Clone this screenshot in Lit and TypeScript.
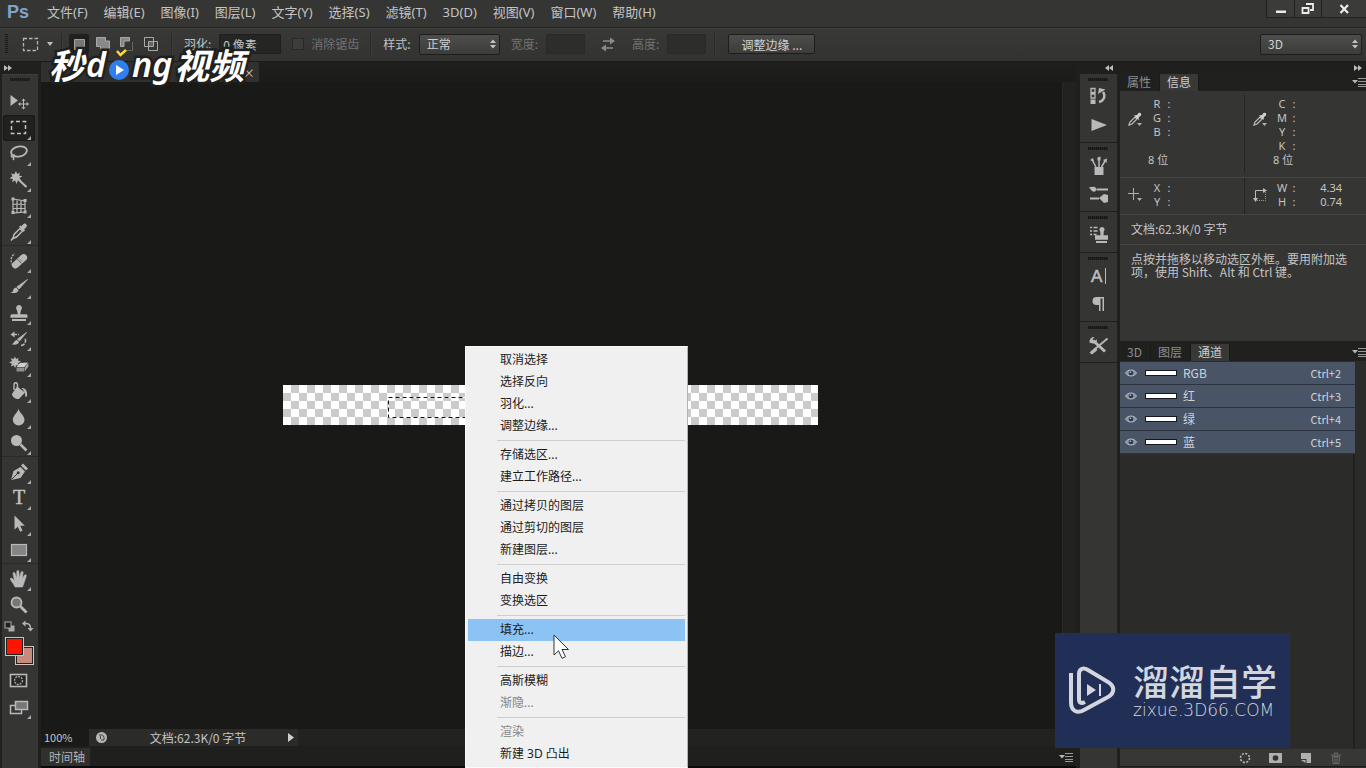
import { LitElement, html, svg, css } from "lit";
import { customElement, property } from "lit/decorators.js";
import { classMap } from "lit/directives/class-map.js";

const icon = (body: unknown, w = 24, h = 24) =>
  html`<svg width=${w} height=${h} viewBox="0 0 ${w} ${h}" aria-hidden="true">${body}</svg>`;

const C = "#b9b9b9";

/* ---------- toolbox glyphs, 24 x 24 ---------- */
const toolArt: Record<string, unknown> = {
  move: svg`<path d="M3.500 5v11l7.500-5.500z" fill=${C}/><path d="M16.500 9.500v9M12 14h9" stroke=${C} stroke-width="1"/><path d="M16.500 8.500l-2 2.300h4zM16.500 19.500l-2-2.300h4zM11 14l2.300-2v4zM22 14l-2.300-2v4z" fill=${C}/>`,
  marquee: svg`<rect x="4.500" y="5.500" width="14" height="12" fill="none" stroke="#c4c4c4" stroke-width="1.500" stroke-dasharray="4 2.500" stroke-dashoffset="2"/>`,
  lasso: svg`<ellipse cx="12" cy="9.500" rx="8" ry="5" transform="rotate(-12 12 9.500)" fill="none" stroke=${C} stroke-width="1.800"/><path d="M5 12.500c-1.500 1-.5 3 1 2.500s2-2 .5-2.500M6 15c1 1 1 2 0 3" fill="none" stroke=${C} stroke-width="1.400"/>`,
  wand: svg`<path d="M9 3l1.200 3 2.800-1.500-1 3 3.500.8-3 1.700 1.800 2.800-3.300-.6L9.500 16l-1.300-3.500L5 14l1-3-3.500-.7 3-2L4 5.500l3.300.8z" fill=${C}/><path d="M12 12l7.500 7" stroke=${C} stroke-width="2.200"/>`,
  crop: svg`<path d="M6 5l12 2v11L6 19zM10 5.500v13M14 6v12.500M6 10l12 .500M6 14.500h12" fill="none" stroke=${C} stroke-width="1.200"/><path d="M4.500 3.500h3v3h-3zM16.500 5h3v3h-3zM16.500 16.500h3v3h-3zM4.500 17h3v3h-3z" fill=${C}/>`,
  eyedrop: svg`<path d="M6 18.500l1-4 6-6 2.500 2.500-6 6z" fill="none" stroke=${C} stroke-width="1.500"/><path d="M4 20.500l2-2.500" stroke=${C} stroke-width="1.500"/><path d="M12 6.500l1.300-1 1 .8 2.200-2.300c1.500-1.500 4.500 1 3 3l-2.300 2.300.8 1.200-1.300 1.300z" fill=${C}/>`,
  heal: svg`<path d="M6 16c-3-2-2.500-10 2-11" fill="none" stroke=${C} stroke-width="1.300" stroke-dasharray="2 1.200"/><rect x="3.500" y="8.800" width="18" height="7" rx="3.500" transform="rotate(-42 12.500 12.300)" fill=${C}/><path d="M10.500 10.200l4 4.200" stroke="#555" stroke-width="1"/><path d="M12.500 9.700l2.500 2.600" stroke="#555" stroke-width=".8" stroke-dasharray="1 1"/>`,
  brush: svg`<path d="M20.500 4.500L12 14l-2.200-2z" fill=${C} stroke=${C} stroke-width=".8"/><path d="M9.300 12.700l2.200 2.200c-.5 3-4.500 3.800-8.500 2.800 2.500-.2 3-1.200 3.500-3.500.5-1.200 2-1.700 2.800-1.500z" fill=${C}/>`,
  stamp: svg`<path d="M12 4a3 3 0 0 1 2 5.200l-.8 4H19c1 0 1.500.7 1.500 1.500v2h-17v-2c0-.8.500-1.500 1.500-1.500h5.800l-.8-4A3 3 0 0 1 12 4zM5 18h14v2H5z" fill=${C}/>`,
  history: svg`<path d="M19.500 5.500L12.500 14l-2-1.800z" fill=${C} stroke=${C} stroke-width=".8"/><path d="M10 13l2 2c-.5 2.500-4 3.300-7.500 2.300 2.300-.3 2.500-4 5.500-4.300z" fill=${C}/><path d="M6 7.500h6M14 18.500c4-.5 5.500-4 4-7.500" fill="none" stroke=${C} stroke-width="1.500" stroke-dasharray="4 1.200"/><path d="M3.500 7.500l4-3v6z" fill=${C}/>`,
  eraser: svg`<path d="M8 3.500l1 2.500 2.500-1-.5 2.500 3 1-3 1.700 1 2.300-2.500-.5L8 15l-1.200-2.700L4 13.500l.8-3L2 9.500l3-1.500-1.200-2.700 2.800.7z" fill=${C}/><path d="M13 10l8-.5-3.500 4.500H9.500z" fill="#cfcfcf"/><path d="M9.500 14.500h8v4h-8z" fill="#8f8f8f"/><path d="M18 14.300l3.300-4.300v3.500L18 18z" fill="#a8a8a8"/>`,
  bucket: svg`<path d="M10 7.500l8 6-6 6.500c-3 .5-7-2-7-5z" fill=${C}/><path d="M10.500 12V6c0-3-3.500-3-3.500 0v5" fill="none" stroke=${C} stroke-width="1.400"/><path d="M14.500 9c4 0 6 2.500 5.500 8-1 2-2 .5-1.800-1 0-2.500-1-4-3.700-7z" fill=${C}/>`,
  blur: svg`<path d="M11.500 4c1 3.500 6 7 6 10.700A5.700 5.700 0 0 1 5.800 14.700C5.800 11 10.500 7.500 11.500 4z" fill=${C}/>`,
  dodge: svg`<circle cx="9.500" cy="9.500" r="5.500" fill=${C}/><path d="M13.500 13.500l6 6" stroke=${C} stroke-width="2.500"/>`,
  pen: svg`<path d="M4 20L6.500 11l7-4 4.500 4.500-4.500 6.500z" fill=${C}/><path d="M14 5.500l2-2 5 5-2 2z" fill=${C}/><path d="M4.500 19.500l6-6" stroke="#353534" stroke-width="1"/><circle cx="11.200" cy="12.800" r="1.500" fill="#353534"/>`,
  type: svg`<text x="12" y="18" text-anchor="middle" font-family="Liberation Serif, serif" font-size="20" font-weight="400" fill="#c4c4c4" stroke="#c4c4c4" stroke-width=".4">T</text>`,
  path: svg`<path d="M7.500 3.500v14l3.300-2.800 2.400 5 2.400-1.200-2.400-4.700h4.600z" fill=${C}/>`,
  rect: svg`<rect x="4.500" y="6.500" width="15" height="11" fill="#858585" stroke=${C} stroke-width="1.200"/>`,
  hand: svg`<path d="M8 20c-1-3-3.500-5-4.500-7.500-.5-1.500 1-1.800 2-.8l2 2L6 6.800c-.3-1.500 1.600-1.900 2-.5L9.700 11 9.800 4.500c0-1.500 2-1.500 2.100 0l.6 6.300 1.600-5.600c.4-1.300 2.200-.9 2 .5l-.9 6.100 2.300-3.600c.8-1.200 2.300-.3 1.800.9-1.300 3.500-2 7-3.800 10.900z" fill=${C} stroke=${C} stroke-width=".6"/>`,
  zoom: svg`<circle cx="9.500" cy="9.500" r="5" fill="#777" stroke=${C} stroke-width="1.800"/><path d="M13.500 13.500l6 6" stroke=${C} stroke-width="2.800"/>`,
  mask: svg`<rect x="3.500" y="5.500" width="16" height="12" fill="#252524" stroke=${C} stroke-width="1.600"/><circle cx="11.500" cy="11.500" r="4" fill="#2a2a29" stroke="#a5a5a5" stroke-width="1.300" stroke-dasharray="2 1"/>`,
  screen: svg`<rect x="3.500" y="10.500" width="11" height="8" fill="#353534" stroke=${C} stroke-width="1.500"/><rect x="8.500" y="6.500" width="12" height="8" fill="#777" stroke=${C} stroke-width="1.500"/>`,
};

type Tool = { id: string; label: string; flyout?: boolean; on?: boolean };
const t = (id: string, label: string, flyout = true, on = false): Tool => ({ id, label, flyout, on });
const toolGroups: Tool[][] = [
  [t("move", "移动", false), t("marquee", "矩形选框", true, true), t("lasso", "套索"), t("wand", "魔棒"), t("crop", "裁剪"), t("eyedrop", "吸管")],
  [t("heal", "修复画笔"), t("brush", "画笔"), t("stamp", "仿制图章"), t("history", "历史记录画笔"), t("eraser", "橡皮擦"), t("bucket", "油漆桶"), t("blur", "模糊"), t("dodge", "减淡")],
  [t("pen", "钢笔"), t("type", "文字"), t("path", "路径选择"), t("rect", "矩形")],
  [t("hand", "抓手"), t("zoom", "缩放", false)],
];

/* ---------- collapsed dock glyphs ---------- */
const dockArt: Record<string, unknown> = {
  history: svg`<path d="M4 3.500h4v4H4zM4 9h4v4H4z" fill="none" stroke=${C} stroke-width="1.300"/><path d="M3.500 14.500h5v4.500h-5z" fill=${C}/><path d="M12 17c5-1.500 7-6 4-10" fill="none" stroke=${C} stroke-width="2.400"/><path d="M11 9l1-6 6.500 1.500z" fill=${C}/>`,
  play: svg`<path d="M4.500 6v12L20 12z" fill=${C}/>`,
  brushes: svg`<path d="M7.500 13h9v8h-9z" fill=${C}/><path d="M9 13L5 5.500M12 13V4M14.500 13L18 7" stroke=${C} stroke-width="1.500"/><path d="M3 6l3-2 1 4zM10.500 3.500l3-1v4h-3zM16 6l4-1.500-.5 4.500z" fill=${C}/>`,
  presets: svg`<path d="M10 7.500h11" stroke=${C} stroke-width="2"/><path d="M2 5c2 .5 3.500-1 6 0l2 2.500-2 2c-3 1-4-1.500-6-4.500z" fill=${C}/><path d="M3 16.500h9" stroke=${C} stroke-width="2"/><path d="M12 16l5-4 4 1v7l-4 1z" fill=${C}/>`,
  source: svg`<path d="M3 4.500h2M3 8h2M3 11.500h2M6.500 4.500h4M6.500 8h4M6.500 11.500h3" stroke=${C} stroke-width="1.500"/><path d="M15 4a2.500 2.500 0 0 1 1.800 4.300l-.3 4H21v4.500H8v-4.500h5.500l-.3-4A2.500 2.500 0 0 1 15 4zM9 18h11v2H9z" fill=${C}/>`,
  glyphA: svg`<text x="4" y="18" font-family="Liberation Sans, sans-serif" font-size="17" fill="#c0c0c0" stroke="#c0c0c0" stroke-width=".5">A</text><path d="M18.500 4v16" stroke=${C}/>`,
  para: svg`<path d="M17 5H9.500a4 4 0 0 0 0 8H12v6h1.500V6.500h2V19H17z" fill=${C}/>`,
  tools: svg`<path d="M6 7.500l12 11" stroke=${C} stroke-width="3"/><path d="M20.500 5.500L8 16" stroke=${C} stroke-width="1.800"/><path d="M2.500 19.500l5.500-5 2.500 2.500-5.500 4.500zM2.500 9.500c-.3-3.500 2-5.500 5-5.500L5.500 6.500l1.500 1.500 3-1.500c.5 3.500-3 5.500-7.500 3z" fill=${C}/>`,
};
const dockGroups = [["history", "play"], ["brushes", "presets"], ["source"], ["glyphA", "para"], ["tools"]];

const menus = ["文件(F)", "编辑(E)", "图像(I)", "图层(L)", "文字(Y)", "选择(S)", "滤镜(T)", "3D(D)", "视图(V)", "窗口(W)", "帮助(H)"];

const contextItems: string[][] = [
  ["取消选择", "选择反向", "羽化...", "调整边缘..."],
  ["存储选区...", "建立工作路径..."],
  ["通过拷贝的图层", "通过剪切的图层", "新建图层..."],
  ["自由变换", "变换选区"],
  ["填充...", "描边..."],
  ["高斯模糊", "渐隐..."],
  ["渲染", "新建 3D 凸出"],
];
const disabledItems = new Set(["渐隐...", "渲染"]);

const channels = [["RGB", "Ctrl+2"], ["红", "Ctrl+3"], ["绿", "Ctrl+4"], ["蓝", "Ctrl+5"]];

const panelMenuIcon = () =>
  icon(svg`<path d="M0 3h6L3 6.500z" fill="#b5b5b5"/><path d="M6 1.500h8M6 4.500h8M6 7.500h8M6 9.500h8" stroke="#9a9a9a" stroke-width="1"/>`, 14, 11);
const arrows = (right: boolean) =>
  icon(right ? svg`<path d="M0 1l4 3-4 3zM4 1l4 3-4 3z" fill="#bdbdbd"/>` : svg`<path d="M4 1L0 4l4 3zM8 1L4 4l4 3z" fill="#bdbdbd"/>`, 8, 8);

const shared = css`
  * { box-sizing: border-box; }
  button, input, select { font: inherit; color: inherit; margin: 0; }
  button { border: 0; padding: 0; background: none; }
  svg { display: block; flex: none; }
`;

@customElement("ps-context-menu")
class PsContextMenu extends LitElement {
  @property() active = "填充...";
  static styles = [shared, css`
    :host { display: block; width: 223px; padding: 2px; background: #f0f0f0; border: 1px solid #fafafa; border-right-color: #b4b4b4; color: #1c1c1c; font-family: "Noto Sans", "Noto Sans CJK SC", sans-serif; font-size: 12px; }
    .item { display: block; width: 100%; height: 22px; padding: 0 0 0 32px; text-align: left; line-height: 22px; }
    .active { background: #8bc3f5; }
    .off { color: #858585; }
    .rule { height: 7px; margin-left: 29px; padding-top: 3px; }
    .rule::before { content: ""; display: block; height: 1px; background: #cfcfcf; }
  `];
  render() {
    return html`<div role="menu">${contextItems.map((g, i) => html`
      ${i ? html`<div class="rule" role="separator"></div>` : ""}
      ${g.map((x) => html`<button role="menuitem" ?disabled=${disabledItems.has(x)} class=${classMap({ item: true, active: x === this.active, off: disabledItems.has(x) })}>${x}</button>`)}`)}
    </div>`;
  }
}

@customElement("ps-toolbox")
class PsToolbox extends LitElement {
  static styles = [shared, css`
    :host { display: flex; flex-direction: column; width: 39px; background: #20201f; border-right: 1px solid #20201f; }
    .head { height: 12px; padding: 2px 4px; }
    .body { flex: 1; margin-left: 2px; background: #353534; border-top: 1px solid #3e3e3d; }
    .grip { height: 3px; width: 20px; margin: 3px auto 8px 8px; background: repeating-linear-gradient(90deg, #181817 0 1px, #262625 1px 2px); }
    .group { display: flex; flex-direction: column; align-items: flex-start; padding-left: 1px; }
    .group + .group { border-top: 1px solid #2a2a29; padding-top: 2px; }
    .tool { position: relative; width: 32px; height: 26px; display: grid; place-items: center; border-radius: 3px; }
    .tool.on { background: #212120; box-shadow: inset 0 0 0 1px #181817; }
    .fly::after { content: ""; position: absolute; right: 4px; bottom: 1px; border: 2px solid transparent; border-right-color: #aaa; border-bottom-color: #aaa; }
    .minis { display: flex; justify-content: space-between; width: 30px; height: 16px; margin-left: 2px; align-items: center; }
    .colors { position: relative; height: 34px; }
    .sw { position: absolute; width: 19px; height: 19px; border: 1px solid #d6c2bd; outline: 1px solid #222; outline-offset: -2px; }
    .bg { left: 13px; top: 12px; background: #c68b7f; }
    .fg { left: 3px; top: 3px; background: #ff1400; }
  `];
  render() {
    const tool = (x: Tool) => html`<button aria-label=${x.label} class=${classMap({ tool: true, on: !!x.on, fly: !!x.flyout })}>${icon(toolArt[x.id])}</button>`;
    return html`
      <div class="head">${arrows(true)}</div>
      <div class="body">
        <div class="grip"></div>
        ${toolGroups.map((g) => html`<div class="group">${g.map(tool)}</div>`)}
        <div class="minis">
          ${icon(svg`<rect x="4.500" y="4.500" width="6" height="6" fill="#aaa"/><rect x="1" y="1" width="6" height="6" fill="#222" stroke="#aaa"/>`, 11, 11)}
          ${icon(svg`<path d="M3 3.500c4-.5 5.500 1.500 5.500 5" fill="none" stroke="#b5b5b5" stroke-width="1.500"/><path d="M0 3.500L3.500.5v6zM8.500 11.500l-3-3.500h6z" fill="#b5b5b5"/>`, 12, 12)}
        </div>
        <div class="colors"><button class="sw bg" aria-label="背景色"></button><button class="sw fg" aria-label="前景色"></button></div>
        <div class="group">${tool(t("mask", "快速蒙版", false))}${tool(t("screen", "屏幕模式"))}</div>
      </div>`;
  }
}

@customElement("ps-options")
class PsOptions extends LitElement {
  static styles = [shared, css`
    :host { display: flex; align-items: center; height: 34px; padding: 0 4px 2px; background: linear-gradient(#383837, #333332); border-top: 1px solid #414140; border-bottom: 1px solid #1c1c1b; font-size: 12px; line-height: 16px; color: #c2c2c2; }
    .grip { width: 3px; height: 20px; margin-left: 1px; background: repeating-linear-gradient(#1c1c1b 0 1px, #343433 1px 2px); }
    .preset { display: flex; align-items: center; gap: 8px; margin: 0 8px 0 14px; }
    .sep { flex: none; width: 2px; height: 22px; background: #2a2a29; border-right: 1px solid #3b3b3a; }
    .modes { display: flex; gap: 4px; margin: 0 10px 0 6px; }
    .mode { width: 20px; height: 20px; display: grid; place-items: center; border-radius: 2px; }
    .mode.on { background: #20201f; }
    label { white-space: nowrap; padding-bottom: 1px; }
    .field { height: 20px; padding: 0 3px; background: #252524; border: 1px solid #1f1f1e; border-radius: 0; min-width: 0; }
    .feather { width: 62px; margin-right: 11px; }
    .size { width: 39px; background: #2d2d2c; border-color: #292928; }
    .dim { color: #737373; }
    .check { display: flex; align-items: center; gap: 7px; margin-right: 11px; }
    .check input { appearance: none; width: 12px; height: 12px; background: #3d3d3c; border: 1px solid #292928; }
    .pick { position: relative; display: flex; align-items: center; }
    .pick svg { position: absolute; right: 4px; pointer-events: none; }
    select { appearance: none; height: 21px; padding: 0 7px; border: 1px solid #1e1e1d; border-radius: 2px; background: linear-gradient(#4d4d4c, #3c3c3b); color: #d0d0d0; }
    .style { width: 81px; }
    .name { margin: 0 8px 0 11px; }
    .swap { margin: 0 5px 0 15px; }
    .last { margin: 0 12px 0 8px; }
    .edge { width: 87px; height: 20px; border: 1px solid #1e1e1d; border-radius: 2px; background: linear-gradient(#4d4d4c, #3c3c3b); color: #d2d2d2; line-height: 17px; }
    .end { margin-left: auto; }
    .work { width: 102px; }
  `];
  render() {
    const ud = icon(svg`<path d="M0 4h6L3 .5zM0 6h6L3 9.500z" fill="#c5c5c5"/>`, 6, 10);
    const modes = [
      svg`<path d="M3.500 3.500h10v10h-10z" fill="#777" stroke="#a0a0a0"/>`,
      svg`<path d="M1.500 1.500h9v3.500h4v9.500H5.500v-4h-4z" fill="#888" stroke="#aaa"/>`,
      svg`<path d="M1.500 1.500h9v3.500H5v5.500H1.500z" fill="#888" stroke="#aaa"/><path d="M13.500 6v8.500H5" fill="none" stroke="#666"/>`,
      svg`<path d="M1.500 1.500h9v9h-9zM5.500 5.500h9v9h-9z" fill="none" stroke="#aaa"/><path d="M6 6h4v4H6z" fill="#666"/>`,
    ];
    return html`
      <div class="grip"></div>
      <div class="preset">
        ${icon(svg`<rect x="1.500" y="1.500" width="14" height="12" fill="none" stroke="#b5b5b5" stroke-width="1.300" stroke-dasharray="3.500 2"/>`, 17, 15)}
        ${icon(svg`<path d="M0 0h6L3 4z" fill="#c0c0c0"/>`, 6, 5)}
      </div>
      <span class="sep"></span>
      <div class="modes">${modes.map((m, i) => html`<button aria-label="选区模式 ${i + 1}" class=${classMap({ mode: true, on: i === 0 })}>${icon(m, 16, 16)}</button>`)}</div>
      <span class="sep"></span>
      <label class="name" for="feather">羽化:</label><input id="feather" class="field feather" value="0 像素" />
      <label class="check dim"><input type="checkbox" disabled />消除锯齿</label>
      <span class="sep"></span>
      <label class="name" for="style">样式:</label>
      <span class="pick"><select id="style" class="style"><option>正常</option></select>${ud}</span>
      <label class="dim name" for="w">宽度:</label><input id="w" class="field size" disabled />
      <span class="swap">${icon(svg`<path d="M3 4h8M5 11h8" stroke="#8a8a8a" stroke-width="1.500"/><path d="M10 .5l5 3.500-5 3.500zM6 7.500L1 11l5 3.500z" fill="#8a8a8a"/>`, 16, 15)}</span>
      <label class="dim name" for="h">高度:</label><input id="h" class="field size" disabled />
      <span class="sep last"></span>
      <button class="edge">调整边缘 ...</button>
      <span class="pick end"><select class="work" aria-label="工作区"><option>3D</option></select>${ud}</span>`;
  }
}

@customElement("ps-panels")
class PsPanels extends LitElement {
  static styles = [shared, css`
    :host { display: flex; flex-direction: column; width: 246px; background: #2b2b29; font-size: 12px; color: #c4c4c4; }
    .tabs { display: flex; height: 17px; background: #20201f; color: #8d8d8d; }
    .tab { padding: 0 8px 1px 7px; line-height: 16px; border-right: 1px solid #1a1a19; }
    .tab.on { background: #383837; color: #cfcfcf; padding: 0 7px 1px; }
    .more { margin: 3px 0 0 auto; width: 14px; overflow: hidden; }
    .info { background: #353534; flex: none; height: 250px; display: flex; flex-direction: column; }
    .cells { display: grid; grid-template-columns: 124fr 122fr; font-family: "Noto Sans", "Noto Sans CJK SC", sans-serif; font-size: 11px; line-height: 14px; border-bottom: 1px solid #454544; }
    .cell { display: grid; grid-template-columns: 20px 14px 6px 1fr; column-gap: 2px; padding: 6px 24px 7px 8px; align-items: start; align-content: start; }
    .cell + .cell { border-left: 1px solid #242423; margin: 4px 0; padding-top: 2px; padding-bottom: 6px; }
    .cell > svg { grid-row: span 5; align-self: start; margin-top: 15px; }
    .pos > svg { grid-row: span 2; margin-top: 6px; }
    .cell + .cell.pos, .cell.pos { padding-bottom: 5px; padding-top: 3px; margin: 0; }
    .num { text-align: right; }
    .bits { grid-column: 2 / -1; margin-left: -2px; }
    .key, .colon { text-align: center; }
    .blank { grid-column: 2 / -1; height: 14px; }
    .doc { padding: 0 11px; height: 30px; line-height: 27px; border-bottom: 1px solid #454544; }
    .tip { margin: 7px 11px 0; line-height: 13px; }
    .gap { height: 3px; background: #1f1f1e; }
    .list { margin: 0; padding: 1px 0 0; list-style: none; width: 235px; }
    .row { display: flex; align-items: center; height: 23px; padding: 0 14px 0 5px; background: #4a5467; border-bottom: 1px solid #2c333f; color: #d0d3d8; line-height: 20px; }
    .thumb { width: 32px; height: 6px; margin: 0 6px 0 8px; background: #fff; border: 1px solid #15181d; }
    .hint { margin-left: auto; font-size: 11px; }
    .rest { flex: 1; margin-right: 11px; border-right: 2px solid #212120; }
    .foot { display: flex; justify-content: flex-end; align-items: center; gap: 18px; height: 18px; padding-right: 24px; background: #373736; border-bottom: 1px solid #1b1b1a; margin-bottom: 1px; }
  `];
  render() {
    const drop = icon(svg`<path d="M1 13l1-3 5-5 2 2-5 5z" fill="none" stroke="#c0c0c0" stroke-width="1.200"/><path d="M6 3.500L9 3l1.500-2c1.500-1 3.500.5 2.500 2.500L11 5l-.5 3z" fill="#d0d0d0"/><path d="M9 11h5l-2.500 3z" fill="#b0b0b0"/>`, 14, 14);
    const kv = (k: string) => html`<span class="key">${k}</span><span class="colon">:</span><span></span>`;
    return html`
      <div class="tabs"><button class="tab">属性</button><button class="tab on">信息</button><span class="more">${panelMenuIcon()}</span></div>
      <section class="info">
        <div class="cells">
          <div class="cell">${drop}${["R", "G", "B"].map(kv)}<span class="blank"></span><span class="bits">8 位</span></div>
          <div class="cell">${drop}${["C", "M", "Y", "K"].map(kv)}<span class="bits">8 位</span></div>
        </div>
        <div class="cells">
          <div class="cell pos">${icon(svg`<path d="M5.500 1v12M0 6.500h11" stroke="#b0b0b0"/><path d="M9 11h5l-2.500 3z" fill="#b0b0b0"/>`, 14, 15)}${["X", "Y"].map(kv)}</div>
          <div class="cell pos">${icon(svg`<path d="M2.500 12V3.500H11" fill="none" stroke="#bbb"/><path d="M12.500 5v8.500H4" fill="none" stroke="#999" stroke-dasharray="1 1"/><path d="M10 1l4 2.500L10 6zM0 11h5l-2.500 4z" fill="#bbb"/>`, 14, 15)}
            <span class="key">W</span><span class="colon">:</span><span class="num">4.34</span>
            <span class="key">H</span><span class="colon">:</span><span class="num">0.74</span></div>
        </div>
        <div class="doc">文档:62.3K/0 字节</div>
        <p class="tip">点按并拖移以移动选区外框。要用附加选项，使用 Shift、Alt 和 Ctrl 键。</p>
      </section>
      <div class="gap"></div>
      <div class="tabs"><button class="tab">3D</button><button class="tab">图层</button><button class="tab on">通道</button><span class="more">${panelMenuIcon()}</span></div>
      <ul class="list">${channels.map(([n, k]) => html`<li class="row">
        ${icon(svg`<path d="M.5 5C3 1 9 1 11.500 5 9 9 3 9 .5 5z" fill="#8993a3" stroke="#b4bac4"/><circle cx="6" cy="5" r="2.300" fill="#2f3745"/><circle cx="5.500" cy="4.300" r=".8" fill="#cfd4db"/>`, 12, 10)}
        <span class="thumb"></span><span>${n}</span><span class="hint">${k}</span></li>`)}</ul>
      <div class="rest"></div>
      <div class="foot">
        ${icon(svg`<circle cx="6" cy="6" r="4.500" fill="none" stroke="#c0c0c0" stroke-width="1.500" stroke-dasharray="2 1.500"/>`, 12, 12)}
        ${icon(svg`<path d="M0 1h13v10H0z" fill="#b0b0b0"/><circle cx="6.500" cy="6" r="2.800" fill="#333"/>`, 13, 12)}
        ${icon(svg`<path d="M1 1h10v10H6.500V7H1z" fill="#b0b0b0"/><path d="M1 8h4.500v3z" fill="#b0b0b0"/>`, 12, 12)}
        ${icon(svg`<path d="M1 3h10M4.500 2.500V1h3v1.500M2.500 4.500l.5 7h6l.5-7zM5 5v6M7 5v6" fill="none" stroke="#6c6c6b"/>`, 12, 12)}
      </div>`;
  }
}

@customElement("app-root")
class AppRoot extends LitElement {
  static styles = [shared, css`
    :host { position: relative; display: flex; flex-direction: column; height: 100vh; overflow: hidden; background: #1f1f1e; color: #c4c4c4; font-family: "Noto Sans CJK SC", "Noto Sans", sans-serif; font-size: 12px; }
    .menubar { display: flex; height: 28px; flex: none; background: #353534; border-bottom: 1px solid #20201f; }
    .brand { width: 39px; padding-left: 7px; font: 700 18px/25px "Liberation Sans", sans-serif; color: #7fa6c9; }
    .menus { display: flex; gap: 16px; padding-left: 8px; font-family: "Noto Sans", "Noto Sans CJK SC", sans-serif; font-size: 13px; }
    .menus button { line-height: 25px; height: 25px; white-space: nowrap; }
    .win { display: flex; margin-left: auto; height: 18px; border: 1px solid #222221; border-top: 0; border-right: 0; background: #3b3b3a; }
    .win button { display: grid; place-items: center; width: 27px; }
    .win button + button { border-left: 1px solid #222221; }
    .win button:last-child { width: 45px; }
    .main { display: flex; flex: 1; min-height: 0; }
    .doc { flex: 1; min-width: 0; display: flex; flex-direction: column; margin-left: 2px; }
    .tabstrip { height: 20px; display: flex; background: linear-gradient(#1f1f1e, #1b1b1a); }
    .tab { display: flex; align-items: center; justify-content: flex-end; width: 218px; padding-right: 4px; background: #30302f; }
    .work { flex: 1; min-height: 0; display: flex; }
    .canvas { flex: 1; display: grid; place-items: center; padding: 0 2px 2px 0; background: #191917; }
    .vbar { width: 14px; background: #222220; border-left: 1px solid #282826; }
    .art { position: relative; width: 535px; height: 40px; background: repeating-conic-gradient(#cbcbcb 0 25%, #fff 0 50%) 0 0 / 16px 16px; }
    .ants { position: absolute; left: 105px; top: 12px; }
    .status { display: flex; height: 17px; line-height: 16px; background: #222221; }
    .pct { width: 48px; padding-left: 3px; background: #1a1a19; font-size: 11px; }
    .stat { display: flex; align-items: center; width: 209px; padding: 0 3px 0 6px; background: #2b2b2a; }
    .stat span { margin: 0 auto; }
    .time { display: flex; height: 20px; margin-top: 2px; background: #1f1f1e; border-bottom: 2px solid #0a0a0a; }
    .time button { padding: 0 5px 1px 8px; line-height: 16px; background: #30302f; color: #b4b4b4; }
    .time svg { margin: 4px 3px 0 auto; }
    .dock { display: flex; flex-direction: column; width: 37px; margin: 0 3px 0 4px; }
    .dhead { height: 12px; padding: 2px 4px; display: flex; justify-content: flex-end; }
    .dgroup { display: flex; flex-direction: column; align-items: center; padding: 9px 0 3px; background: #353534 repeating-linear-gradient(90deg, #161615 0 1px, #242423 1px 2px) 8px 4px / 20px 3px no-repeat; border-bottom: 1px solid #1f1f1e; }
    .dgroup button { height: 28px; width: 30px; display: grid; place-items: center; }
    .dfill { flex: 1; background: #353534; }
    .right { display: flex; flex-direction: column; }
    .right ps-panels { flex: 1; }
    .menu { position: absolute; left: 465px; top: 346px; }
    .cursor { position: absolute; left: 553px; top: 634px; }
    .video { position: absolute; left: 49px; top: 44px; display: flex; align-items: center; gap: 2px; color: #fff; font-size: 35px; line-height: 40px; font-weight: 700; font-style: italic; -webkit-text-stroke: 5px #20201f; paint-order: stroke fill; }
    .latin { font-family: "Noto Sans", sans-serif; font-weight: 600; font-size: 34px; }
    .brandbox { position: absolute; right: 76px; bottom: 20px; display: flex; align-items: center; gap: 17px; width: 235px; height: 115px; padding: 0 0 1px 13px; background: #212f56; color: #d3d6df; white-space: nowrap; }
    .cn { font-size: 36px; font-weight: 500; line-height: 40px; }
    .url { font: 200 17px/20px "DejaVu Sans", sans-serif; }
  `];
  render() {
    return html`
      <header class="menubar">
        <div class="brand">Ps</div>
        <nav class="menus">${menus.map((m) => html`<button>${m}</button>`)}</nav>
        <div class="win">
          <button aria-label="最小化">${icon(svg`<path d="M1 8.500h10v2.500H1z" fill="#ececec"/>`, 12, 14)}</button>
          <button aria-label="还原">${icon(svg`<path d="M5 2h7v6H9M1.500 6h6v5h-6z" fill="none" stroke="#ececec" stroke-width="1.800"/>`, 14, 14)}</button>
          <button aria-label="关闭">${icon(svg`<path d="M1.500 2l7.500 8M9 2l-7.500 8" stroke="#ececec" stroke-width="2.200"/>`, 11, 12)}</button>
        </div>
      </header>
      <ps-options></ps-options>
      <div class="main">
        <ps-toolbox></ps-toolbox>
        <main class="doc">
          <div class="tabstrip"><button class="tab" aria-label="关闭文档">×</button></div>
          <div class="work">
            <div class="canvas"><div class="art">
              <svg class="ants" width="121" height="21"><rect x=".5" y=".5" width="120" height="20" fill="none" stroke="#fff"/><rect x=".5" y=".5" width="120" height="20" fill="none" stroke="#111" stroke-dasharray="4 3"/></svg>
            </div></div>
            <div class="vbar"></div>
          </div>
          <div class="status"><div class="pct">100%</div>
            <div class="stat">${icon(svg`<circle cx="6.500" cy="6.500" r="5.500" fill="#b5b5b5"/><path d="M4 4h3.500L9 6v3H6M5.500 5v3" fill="none" stroke="#444"/>`, 13, 13)}<span>文档:62.3K/0 字节</span>${icon(svg`<path d="M0 0v9l6-4.500z" fill="#cfcfcf"/>`, 7, 9)}</div>
          </div>
          <div class="time"><button>时间轴</button>${panelMenuIcon()}</div>
        </main>
        <aside class="dock">
          <div class="dhead">${arrows(false)}</div>
          ${dockGroups.map((g) => html`<div class="dgroup">${g.map((x) => html`<button aria-label=${x}>${icon(dockArt[x])}</button>`)}</div>`)}
          <div class="dfill"></div>
        </aside>
        <div class="right"><div class="dhead">${arrows(true)}</div><ps-panels></ps-panels></div>
      </div>
      <div class="video"><span>秒</span><span class="latin">d</span>${icon(svg`<circle cx="11" cy="23" r="10" fill="#2f80ee"/><path d="M8 18v10l8-5z" fill="#fff"/><path d="M9 4l3.500 4L18 3" fill="none" stroke="#ffd92e" stroke-width="2.500"/>`, 22, 34)}<span class="latin">ng</span><span>视频</span></div>
      <ps-context-menu class="menu"></ps-context-menu>
      <svg class="cursor" width="18" height="26" viewBox="0 0 18 26" aria-hidden="true"><path d="M1 1v20l4.500-4.200 3.500 7.500 3.500-1.600-3.500-7.200h6.500z" fill="#fff" stroke="#333"/></svg>
      <div class="brandbox">
        ${icon(svg`<path d="M3 9v29c0 9 6 12 13 8l24-13c7-4 7-11 0-15l-20-12c-5-3-9-1-9 4v25c0 4 2 5 6 3" fill="none" stroke="#d3d6df" stroke-width="4"/><path d="M19 20v12l9-6z" fill="#d3d6df"/><path d="M32 20v12" stroke="#d3d6df" stroke-width="2"/>`, 48, 52)}
        <div><div class="cn">溜溜自学</div><div class="url">zixue.3D66.COM</div></div>
      </div>`;
  }
}
